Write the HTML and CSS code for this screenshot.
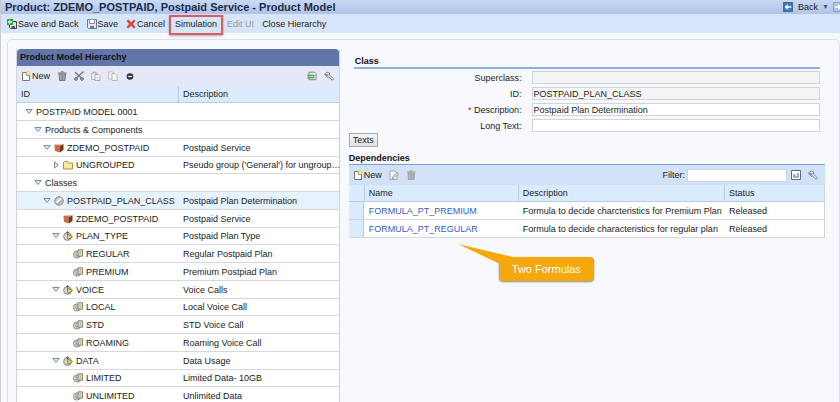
FILE: index.html
```
<!DOCTYPE html>
<html lang="en">
<head>
    <meta charset="UTF-8">
    <meta name="viewport" content="width=device-width, initial-scale=1.0">
    <title>Product Model</title>
    <link rel="stylesheet" href="styles.css">
</head>
<body>
    <!-- Shared icons -->
    <svg class="sprite" aria-hidden="true">
        <symbol id="new" viewBox="0 0 10 10">
            <path d="M1.500 1.500h4v3h3v5h-7z" fill="#fff" stroke="#777" />
            <path d="M7 0v5M4.500 2.500h5M5.500 1l3 3M8.500 1l-3 3" stroke="#dccb2a" />
            <circle cx="7" cy="2.500" r="1.200" fill="#fffbb0" />
        </symbol>
        <symbol id="trash" viewBox="0 0 10 10">
            <path d="M2 3h6.500L8 9.500H2.500z" fill="#b9bcc2" stroke="currentColor" stroke-width=".8" />
            <path d="M1 2h8.500M4 .8h2.500" stroke="currentColor" />
            <path d="M4 4v5M5.500 4v5M7 4v5" stroke="currentColor" stroke-width=".6" />
        </symbol>
        <symbol id="cut" viewBox="0 0 10 10">
            <path d="M1 1l6.500 6M9.500 .5L2.500 7" stroke="#777" stroke-width="1.300" />
            <circle cx="2" cy="8" r="1.300" fill="none" stroke="#555" />
            <circle cx="8" cy="8" r="1.300" fill="none" stroke="#555" />
        </symbol>
        <symbol id="paste" viewBox="0 0 10 10">
            <path d="M.5 2h5.500v6.500H.5z" fill="#eee" stroke="#aaa" stroke-width=".8" />
            <path d="M2 2L3.300.6 4.600 2" fill="none" stroke="#999" stroke-width=".8" />
            <path d="M4 3.500h3l2 2v4H4z" fill="#f8f8f8" stroke="#999" stroke-width=".8" />
            <path d="M5.500 6.500h2M5.500 8h2" stroke="#bbb" stroke-width=".6" />
        </symbol>
        <symbol id="copy" viewBox="0 0 10 10">
            <path d="M.5.8h4l1.500 1.500V8H.5z" fill="#eee" stroke="#b5b5b5" stroke-width=".8" />
            <path d="M4 2.500h3l2 2v5H4z" fill="#f8f8f8" stroke="#aaa" stroke-width=".8" />
        </symbol>
        <symbol id="minus" viewBox="0 0 10 10">
            <circle cx="5" cy="5.500" r="3.300" fill="#333" />
            <path d="M3.200 5.500h3.600" stroke="#fff" stroke-width="1.300" />
        </symbol>
        <symbol id="export" viewBox="0 0 10 10">
            <path d="M2 1.200h5.500l1.500 1.500v6H2z" fill="#fff" stroke="#667" stroke-width=".8" />
            <path d="M.5 3.500h7v4h-7z" fill="#4fa566" />
            <path d="M1.500 5.500h5" stroke="#d8f0d8" stroke-width=".8" />
        </symbol>
        <symbol id="wrench" viewBox="0 0 10 10">
            <path d="M.8 4C1 1.500 3.500.5 5.500 2v2.200l4 3.600-1.300 1.500-3.500-3.300-1.500.3-1.400-1.600 1.800.2.800-.9-1-1z" fill="#f4f4f4" stroke="#666" stroke-width=".8" />
        </symbol>
        <symbol id="edit" viewBox="0 0 10 10">
            <path d="M1 1h5l2 2v6.500H1z" fill="#f3f3f3" stroke="#999" stroke-width=".8" />
            <path d="M3.500 7l4.500-4.500 1.500 1.300-4.500 4.500-1.800.4z" fill="#ddd" stroke="#888" stroke-width=".7" />
        </symbol>
        <symbol id="chart" viewBox="0 0 10 10">
            <path d="M.5.500h9v9h-9z" fill="#fff" stroke="#5a6c8c" />
            <path d="M3 8V4M5 8V5.500M7 8V3" stroke="#45597c" />
        </symbol>
        <symbol id="floppy" viewBox="0 0 10 10">
            <path d="M.5.500h9v9h-8l-1-1z" fill="#dfe6f0" stroke="#6a7a92" />
            <path d="M2.500.500h5v4h-5z" fill="#fff" stroke="#8795a8" />
            <path d="M3 7h4v2.500H3z" fill="#6a7a92" />
        </symbol>
        <symbol id="saveback" viewBox="0 0 10 10">
            <path d="M2.500 2.500h7v7h-6l-1-1z" fill="#dfe6f0" stroke="#444" />
            <path d="M4.500 7h3.500v2.500H4.500z" fill="#555" />
            <path d="M0 0h6v6H0z" fill="#39a042" />
            <path d="M.8 3L3 .8v1.400h2v1.600H3v1.400z" fill="#fff" />
        </symbol>
        <symbol id="cancel" viewBox="0 0 10 10">
            <path d="M.5 2L2.500.5 5 3.200 8 .5 9.500 2 7 5l2.500 3L7.800 9.500 5 6.800 2.200 9.500.5 8 3.200 5z" fill="#d8453a" />
        </symbol>
        <symbol id="left" viewBox="0 0 12 12">
            <path d="M.5.500h11v11H.500z" fill="#3f78b8" stroke="#2d5f99" />
            <path d="M2 6l4-3.500V5h4v2H6v2.500z" fill="#fff" />
        </symbol>
        <symbol id="right" viewBox="0 0 12 12">
            <path d="M.5.500h11v11H.500z" fill="#a9c3e6" stroke="#7c9cc8" />
            <path d="M10 6L6 2.500V5H2v2h4v2.500z" fill="#fff" />
        </symbol>
        <symbol id="open" viewBox="0 0 8 8">
            <path d="M.8 1.500h6.400L4 5.500z" fill="#dfe9f2" stroke="#7590a8" />
        </symbol>
        <symbol id="closed" viewBox="0 0 8 8">
            <path d="M2.500.8v6.400L6 4z" fill="#dfe9f2" stroke="#7590a8" />
        </symbol>
        <symbol id="box" viewBox="0 0 10 10">
            <path d="M.5 2L5 .5l4.500 1L6 3z" fill="#ecc2a6" />
            <path d="M.5 2L6 3v6.500L1 8z" fill="#c8703f" />
            <path d="M6 3l3.500-1.500V7L6 9.500z" fill="#7d3620" />
            <path d="M.5 2L6 3l3.500-1.500" fill="none" stroke="#8b4527" stroke-width=".5" />
        </symbol>
        <symbol id="folder" viewBox="0 0 10 10">
            <path d="M.5 9V2.500l1-1h3l1 1.500h4v6z" fill="#f8eda0" stroke="#a9934a" />
        </symbol>
        <symbol id="class" viewBox="0 0 10 10">
            <circle cx="5" cy="5" r="4.200" fill="#c9c9c9" stroke="#888" />
            <path d="M2.500 6.500L7 2.500" stroke="#fff" stroke-width="1.500" />
            <path d="M4 8l4-3" stroke="#999" />
        </symbol>
        <symbol id="trait" viewBox="0 0 10 10">
            <circle cx="4.500" cy="5.500" r="3.900" fill="#d5d5d0" stroke="#777" stroke-width=".8" />
            <path d="M4.500 0v4M3 1.500h3" stroke="#666" stroke-width=".9" />
            <path d="M4.500 3l5 2.500-4.500 3z" fill="#eedf74" stroke="#776b27" stroke-width=".8" />
        </symbol>
        <symbol id="value" viewBox="0 0 10 10">
            <circle cx="4" cy="5.500" r="3.600" fill="#d8d8d4" stroke="#777" stroke-width=".8" />
            <path d="M3 3v4h2" fill="none" stroke="#888" stroke-width=".8" />
            <path d="M5 .8h4.500v6.400H5z" fill="#ece7a2" stroke="#666" stroke-width=".8" />
            <path d="M6.500 3h1.500M6.500 5h1.500" stroke="#777" stroke-width=".7" />
        </symbol>
    </svg>

    <header class="titlebar">
        <h1>Product: ZDEMO_POSTPAID, Postpaid Service - Product Model</h1>
        <nav class="history">
            <button type="button"><svg class="icon"><use href="#left" /></svg>Back</button>
            <button type="button" class="more" aria-label="Back options">▼</button>
            <button type="button" class="forward" aria-label="Forward"><svg class="icon"><use href="#right" /></svg></button>
        </nav>
    </header>

    <div class="actions">
        <button type="button"><svg class="icon"><use href="#saveback" /></svg>Save and Back</button>
        <button type="button"><svg class="icon"><use href="#floppy" /></svg>Save</button>
        <button type="button"><svg class="icon"><use href="#cancel" /></svg>Cancel</button>
        <button type="button" class="marked">Simulation</button>
        <button type="button" disabled>Edit UI</button>
        <button type="button">Close Hierarchy</button>
    </div>

    <main class="content">
        <section class="hierarchy">
            <h2>Product Model Hierarchy</h2>
            <div class="tools">
                <button type="button"><svg class="icon"><use href="#new" /></svg>New</button>
                <button type="button" aria-label="Delete"><svg class="icon"><use href="#trash" /></svg></button>
                <button type="button" aria-label="Cut"><svg class="icon"><use href="#cut" /></svg></button>
                <button type="button" aria-label="Paste"><svg class="icon"><use href="#paste" /></svg></button>
                <button type="button" aria-label="Copy"><svg class="icon"><use href="#copy" /></svg></button>
                <button type="button" aria-label="Remove"><svg class="icon"><use href="#minus" /></svg></button>
                <div class="tools-end">
                    <button type="button" aria-label="Export"><svg class="icon"><use href="#export" /></svg></button>
                    <button type="button" aria-label="Settings"><svg class="icon"><use href="#wrench" /></svg></button>
                </div>
            </div>
            <table class="tree">
                <thead>
                    <tr><th class="col-id">ID</th><th>Description</th></tr>
                </thead>
                <tbody>
                    <tr><td colspan="2"><div class="node"><svg class="toggle"><use href="#open" /></svg>POSTPAID MODEL 0001</div></td></tr>
                    <tr><td colspan="2"><div class="node level-1"><svg class="toggle"><use href="#open" /></svg>Products &amp; Components</div></td></tr>
                    <tr><td><div class="node level-2"><svg class="toggle"><use href="#open" /></svg><svg class="icon"><use href="#box" /></svg>ZDEMO_POSTPAID</div></td><td>Postpaid Service</td></tr>
                    <tr><td><div class="node level-3"><svg class="toggle"><use href="#closed" /></svg><svg class="icon"><use href="#folder" /></svg>UNGROUPED</div></td><td>Pseudo group ('General') for ungroup…</td></tr>
                    <tr><td colspan="2"><div class="node level-1"><svg class="toggle"><use href="#open" /></svg>Classes</div></td></tr>
                    <tr class="selected"><td><div class="node level-2"><svg class="toggle"><use href="#open" /></svg><svg class="icon"><use href="#class" /></svg>POSTPAID_PLAN_CLASS</div></td><td>Postpaid Plan Determination</td></tr>
                    <tr><td><div class="node level-3"><svg class="toggle"></svg><svg class="icon"><use href="#box" /></svg>ZDEMO_POSTPAID</div></td><td>Postpaid Service</td></tr>
                    <tr><td><div class="node level-3"><svg class="toggle"><use href="#open" /></svg><svg class="icon"><use href="#trait" /></svg>PLAN_TYPE</div></td><td>Postpaid Plan Type</td></tr>
                    <tr><td><div class="node level-4"><svg class="toggle"></svg><svg class="icon"><use href="#value" /></svg>REGULAR</div></td><td>Regular Postpaid Plan</td></tr>
                    <tr><td><div class="node level-4"><svg class="toggle"></svg><svg class="icon"><use href="#value" /></svg>PREMIUM</div></td><td>Premium Postpiad Plan</td></tr>
                    <tr><td><div class="node level-3"><svg class="toggle"><use href="#open" /></svg><svg class="icon"><use href="#trait" /></svg>VOICE</div></td><td>Voice Calls</td></tr>
                    <tr><td><div class="node level-4"><svg class="toggle"></svg><svg class="icon"><use href="#value" /></svg>LOCAL</div></td><td>Local Voice Call</td></tr>
                    <tr><td><div class="node level-4"><svg class="toggle"></svg><svg class="icon"><use href="#value" /></svg>STD</div></td><td>STD Voice Call</td></tr>
                    <tr><td><div class="node level-4"><svg class="toggle"></svg><svg class="icon"><use href="#value" /></svg>ROAMING</div></td><td>Roaming Voice Call</td></tr>
                    <tr><td><div class="node level-3"><svg class="toggle"><use href="#open" /></svg><svg class="icon"><use href="#trait" /></svg>DATA</div></td><td>Data Usage</td></tr>
                    <tr><td><div class="node level-4"><svg class="toggle"></svg><svg class="icon"><use href="#value" /></svg>LIMITED</div></td><td>Limited Data- 10GB</td></tr>
                    <tr><td><div class="node level-4"><svg class="toggle"></svg><svg class="icon"><use href="#value" /></svg>UNLIMITED</div></td><td>Unlimited Data</td></tr>
                </tbody>
            </table>
        </section>

        <section class="details">
            <form class="class-form">
                <h2>Class</h2>
                <div class="fields">
                    <label for="superclass">Superclass:</label>
                    <input type="text" id="superclass" readonly>
                    <label for="classId">ID:</label>
                    <input type="text" id="classId" value="POSTPAID_PLAN_CLASS" readonly>
                    <label for="description"><span class="required">*</span> Description:</label>
                    <input type="text" id="description" value="Postpaid Plan Determination">
                    <label for="longText">Long Text:</label>
                    <input type="text" id="longText">
                </div>
            </form>
            <button type="button" class="texts">Texts</button>

            <div class="dependencies">
                <h2>Dependencies</h2>
                <div class="tools">
                    <button type="button"><svg class="icon"><use href="#new" /></svg>New</button>
                    <button type="button" aria-label="Edit" disabled><svg class="icon"><use href="#edit" /></svg></button>
                    <button type="button" aria-label="Delete" disabled><svg class="icon"><use href="#trash" /></svg></button>
                    <div class="tools-end">
                        <label for="filter">Filter:</label>
                        <input type="text" id="filter">
                        <button type="button" aria-label="Chart"><svg class="icon"><use href="#chart" /></svg></button>
                        <button type="button" aria-label="Settings"><svg class="icon"><use href="#wrench" /></svg></button>
                    </div>
                </div>
                <table class="formulas">
                    <thead>
                        <tr><th class="col-select"></th><th class="col-name">Name</th><th>Description</th><th class="col-status">Status</th></tr>
                    </thead>
                    <tbody>
                        <tr><td class="select"></td><td><a href="#premium">FORMULA_PT_PREMIUM</a></td><td>Formula to decide charcteristics for Premium Plan</td><td>Released</td></tr>
                        <tr><td class="select"></td><td><a href="#regular">FORMULA_PT_REGULAR</a></td><td>Formula to decide characteristics for regular plan</td><td>Released</td></tr>
                    </tbody>
                </table>
                <div class="callout">
                    <svg class="callout-tail" viewBox="0 0 70 20"><path d="M0 0L59 14H42V20z" fill="#f5a80c" /></svg>
                    <span class="callout-text">Two Formulas</span>
                </div>
            </div>
        </section>
    </main>
</body>
</html>
```
FILE: styles.css
```
* {
    box-sizing: border-box;
}
body {
    font-family: "Liberation Sans", Arial, sans-serif;
    font-size: 9px;
    line-height: 12px;
    margin: 0;
    height: 100vh;
    overflow: hidden;
    display: flex;
    flex-direction: column;
    color: #222;
    background: #f8f9fe;
    border-left: 1px solid #c9ccd6;
}
h1, h2 {
    margin: 0;
    font-weight: bold;
}
h2 {
    font-size: 9px;
    color: #111;
}
button, input {
    font: inherit;
    color: inherit;
}
button {
    display: flex;
    align-items: center;
    gap: 1px;
    padding: 0;
    background: none;
    border: none;
    cursor: pointer;
}
button:disabled {
    color: #999;
    cursor: default;
}
.sprite {
    position: absolute;
    width: 0;
    height: 0;
}
.icon {
    width: 10px;
    height: 10px;
    flex: none;
}
.toggle {
    width: 8px;
    height: 8px;
    flex: none;
}

/* Title and action bars */
.titlebar {
    flex: none;
    display: flex;
    align-items: center;
    justify-content: space-between;
    height: 14px;
    padding-left: 4px;
    overflow: hidden;
    background: linear-gradient(#c9d9f3, #afc3e8);
}
.titlebar h1 {
    font-size: 11px;
    line-height: 14px;
    color: #1c2c4a;
}
.history {
    display: flex;
    align-items: center;
    gap: 4px;
}
.history button {
    gap: 5px;
}
.history .more {
    font-size: 7px;
    color: #45597c;
}
.history .forward {
    width: 7px;
    overflow: hidden;
}
.actions {
    flex: none;
    display: flex;
    align-items: center;
    gap: 8px;
    height: 19px;
    padding-left: 6px;
    background: #d7e5f9;
}
.actions .marked {
    position: relative;
    margin: 0 2px;
}
.actions .marked::after {
    content: "";
    position: absolute;
    inset: -3px -6px -5px;
    border: 2px solid #df5a5c;
    box-shadow: 0 1px 2px rgba(0, 0, 0, 0.3);
}

.content {
    flex: none;
    display: grid;
    grid-template-columns: 17fr 25fr;
    gap: 9px;
    margin: 6px 0 0 6px;
    padding: 9px 14px 0 8px;
    border: 1px solid #dcdfe5;
    border-bottom: none;
    border-radius: 5px 5px 0 0;
}
.tools {
    display: flex;
    align-items: center;
    gap: 7px;
    height: 20px;
    padding: 0 5px 0 4px;
    background: #e5e8f8;
}
.tools button {
    color: #222;
}
.tools button[aria-label] {
    color: #666;
}
.tools button:disabled {
    color: #999;
}
.tools-end {
    display: flex;
    align-items: center;
    gap: 7px;
    margin-left: auto;
}
table {
    width: 100%;
    table-layout: fixed;
    border-collapse: separate;
    border-spacing: 0;
    background: #fff;
}
th, td {
    height: 18px;
    padding: 0 4px;
    text-align: left;
    font-weight: normal;
    white-space: nowrap;
    border-bottom: 1px solid #d6d8dc;
}
th {
    background: #daebfd;
    border-bottom-color: #b9cfe8;
}
th + th {
    border-left: 1px solid #b5cbe4;
}

/* Product model tree */
.hierarchy {
    border: 1px solid #cfd3da;
    border-top: none;
}
.hierarchy h2 {
    padding-left: 3px;
    line-height: 17px;
    background: #6275a9;
    border-radius: 4px 4px 0 0;
}
.tree th {
    height: 17px;
}
.tree .col-id {
    width: 50%;
}
.tree td {
    padding: 0 0 0 5px;
}
.tree td:first-child {
    padding-left: 8px;
}
.tree tr:nth-child(4n) td {
    height: 17px;
}
.tree .selected td {
    background: #e6f2fd;
}
.node {
    display: flex;
    align-items: center;
    gap: 3px;
}
.level-1 {
    padding-left: 9px;
}
.level-2 {
    padding-left: 18px;
}
.level-3 {
    padding-left: 27px;
}
.level-4 {
    padding-left: 37px;
}

/* Class form */
.class-form {
    padding: 6px 5px 0;
}
.class-form h2 {
    padding-left: 1px;
    border-bottom: 2px solid #8fb0dc;
}
.fields {
    display: grid;
    grid-template-columns: 36% 1fr;
    gap: 3px 10px;
    align-items: center;
    margin-top: 2px;
}
.fields label {
    text-align: right;
}
input {
    width: 100%;
    height: 13px;
    padding: 0 1px;
    background: #fff;
    border: 1px solid #cfd3da;
}
input:read-only {
    background: #f4f4f4;
}
.required {
    color: #d22;
}
.texts {
    height: 14px;
    margin-top: 1px;
    padding: 0 3px;
    background: linear-gradient(#f6f6f6, #e2e2e2);
    border: 1px solid #aaa;
}

/* Dependencies table */
.dependencies {
    position: relative;
    margin-top: 5px;
}
.dependencies h2 {
    border-bottom: 1px solid #7f9bd0;
}
.dependencies .tools {
    padding-right: 7px;
    background: #d0e1f8;
}
.dependencies .tools-end {
    gap: 2px;
}
.dependencies .tools-end button {
    margin-left: 2px;
}
.dependencies .tools-end button:last-child {
    margin-left: 5px;
}
#filter {
    width: 100px;
}
.formulas {
    border-right: 1px solid #cfd3da;
}
.formulas th {
    height: 17px;
}
.formulas td {
    padding-left: 5px;
}
.formulas .select {
    background: #daebfd;
    border-right: 1px solid #b5cbe4;
}
.col-select {
    width: 15px;
}
.col-name {
    width: 154px;
}
.col-status {
    width: 100px;
}
.formulas a {
    color: #3560c4;
    text-decoration: none;
}
.callout {
    position: absolute;
    top: 105px;
    left: 150px;
}
.callout-text {
    display: block;
    padding: 6px 13px;
    font-size: 11px;
    color: #fff;
    background: #f5a80c;
    border-radius: 4px;
    box-shadow: 0 1px 2px rgba(0, 0, 0, 0.45);
}
.callout-tail {
    position: absolute;
    top: -13px;
    left: -41px;
    width: 70px;
    height: 20px;
}
```
